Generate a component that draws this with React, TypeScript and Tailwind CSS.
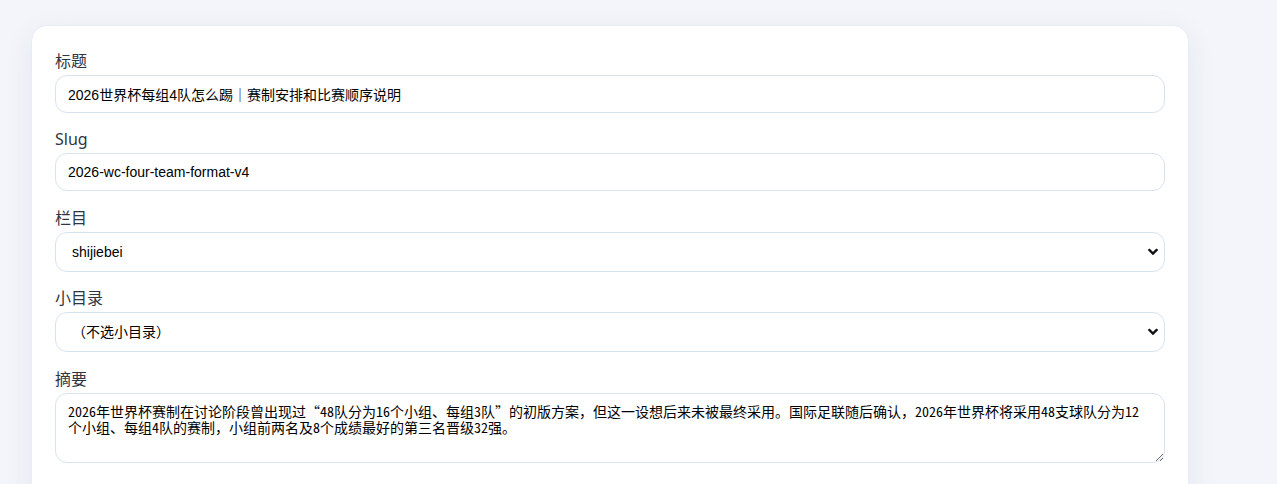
import React from "react";

const labelCls =
  "block text-[16px] leading-[24px] mb-[2px] text-[#2f3542] [font-family:'Noto_Sans','Noto_Sans_CJK_SC',sans-serif]";
const boxCls =
  "block w-full border border-[#d8e2ef] rounded-[12px] bg-white text-black outline-none";

function Chevron() {
  return (
    <svg
      className="pointer-events-none absolute right-[7px] top-1/2 -translate-y-1/2"
      width="10"
      height="7"
      viewBox="0 0 10 7"
    >
      <path d="M1.5 1.5 L5 5 L8.5 1.5" fill="none" stroke="#111" strokeWidth="2.3" strokeLinecap="square" />
    </svg>
  );
}

export default function App() {
  const summary =
    "2026年世界杯赛制在讨论阶段曾出现过“48队分为16个小组、每组3队”的初版方案，但这一设想后来未被最终采用。国际足联随后确认，2026年世界杯将采用48支球队分为12个小组、每组4队的赛制，小组前两名及8个成绩最好的第三名晋级32强。";
  return (
    <div className="min-h-[484px] bg-[#f3f5fa] pl-[31px] pt-[25px] overflow-hidden">
      <div className="w-[1158px] h-[500px] bg-white rounded-[16px] border border-[#e8edf5] shadow-[0_8px_30px_rgba(30,50,100,0.07)] px-[23px] pt-[23px]">
        <div className="mb-[14px]">
          <label className={labelCls}>标题</label>
          <input
            readOnly
            value="2026世界杯每组4队怎么踢｜赛制安排和比赛顺序说明"
            className={`${boxCls} h-[38px] px-[12px] text-[14px] [font-family:'Liberation_Sans','Noto_Sans_CJK_SC',sans-serif]`}
          />
        </div>
        <div className="mb-[15px]">
          <label className={labelCls}>Slug</label>
          <input
            readOnly
            value="2026-wc-four-team-format-v4"
            className={`${boxCls} h-[38px] px-[12px] text-[14px] [font-family:'Liberation_Sans','Noto_Sans_CJK_SC',sans-serif]`}
          />
        </div>
        <div className="mb-[14px]">
          <label className={labelCls}>栏目</label>
          <div className="relative">
            <select
              defaultValue="shijiebei"
              className={`${boxCls} appearance-none h-[40px] pl-[16px] pr-[36px] text-[14px] [font-family:'Liberation_Sans','Noto_Sans_CJK_SC',sans-serif]`}
            >
              <option value="shijiebei">shijiebei</option>
            </select>
            <Chevron />
          </div>
        </div>
        <div className="mb-[15px]">
          <label className={labelCls}>小目录</label>
          <div className="relative">
            <select
              defaultValue=""
              className={`${boxCls} appearance-none h-[40px] pl-[16px] pr-[36px] text-[14px] [font-family:'Liberation_Sans','Noto_Sans_CJK_SC',sans-serif]`}
            >
              <option value="">（不选小目录）</option>
            </select>
            <Chevron />
          </div>
        </div>
        <div>
          <label className={labelCls}>摘要</label>
          <textarea
            readOnly
            value={summary}
            className={`${boxCls} h-[70px] px-[12px] pt-[9px] text-[14px] leading-[16px] resize-y [font-family:'Noto_Sans_Mono_CJK_SC','Noto_Sans_CJK_SC',monospace]`}
          />
        </div>
      </div>
    </div>
  );
}
